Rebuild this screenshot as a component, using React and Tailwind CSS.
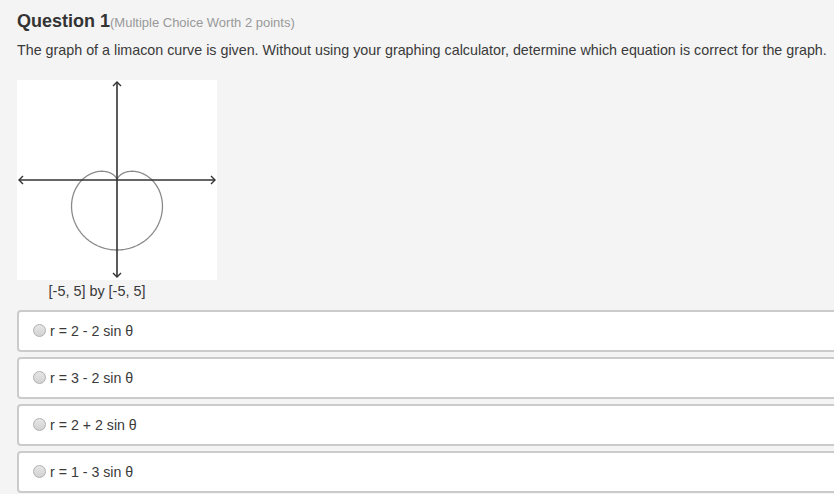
import React from "react";

function curvePath() {
  const cx = 117, cy = 180, s = 17.5;
  const pts = [];
  for (let i = 0; i <= 360; i++) {
    const t = (i / 360) * Math.PI * 2;
    const r = 2 - 2 * Math.sin(t);
    const x = cx + r * Math.cos(t) * s;
    const y = cy - r * Math.sin(t) * s;
    pts.push(`${i === 0 ? "M" : "L"}${x.toFixed(2)},${y.toFixed(2)}`);
  }
  return pts.join(" ");
}

function Graph() {
  const d = curvePath();
  return (
    <svg width="200" height="200" viewBox="17 80 200 200" className="block bg-white">
      <path d={d} fill="none" stroke="#8a8a8a" strokeWidth="1.3" />
      <line x1="19" y1="180" x2="215" y2="180" stroke="#333" strokeWidth="1.6" />
      <line x1="117" y1="82" x2="117" y2="277" stroke="#333" strokeWidth="1.6" />
      <path d="M23,176 L19,180 L23,184" fill="none" stroke="#333" strokeWidth="1.4" />
      <path d="M211,176 L215,180 L211,184" fill="none" stroke="#333" strokeWidth="1.4" />
      <path d="M113,86 L117,82 L121,86" fill="none" stroke="#333" strokeWidth="1.4" />
      <path d="M113,273 L117,277 L121,273" fill="none" stroke="#333" strokeWidth="1.4" />
    </svg>
  );
}

const options = ["r = 2 - 2 sin θ", "r = 3 - 2 sin θ", "r = 2 + 2 sin θ", "r = 1 - 3 sin θ"];

export default function App() {
  return (
    <div
      className="w-[834px] h-[494px] overflow-hidden bg-[#f4f4f4] text-[#333]"
      style={{ fontFamily: '"Liberation Sans", Arial, sans-serif' }}
    >
      <div className="pl-[17px] pt-[8px]">
        <div className="flex items-baseline h-[22px]">
          <span className="text-[18px] font-bold text-[#333]">Question 1</span>
          <span className="text-[13px] text-[#999]">(Multiple Choice Worth 2 points)</span>
        </div>
        <p className="mt-[11px] text-[14.3px] leading-[18px] text-[#3a3a3a] whitespace-nowrap">
          The graph of a limacon curve is given. Without using your graphing calculator, determine which equation is correct for the graph.
        </p>
        <div className="mt-[21px]">
          <Graph />
        </div>
        <div className="w-[200px] text-center text-[14.4px] leading-[18px] mt-[2px] text-[#3a3a3a]">
          <span className="inline-block -ml-[40px]">[-5, 5] by [-5, 5]</span>
        </div>
        <div className="mt-[10px] flex flex-col gap-[5px] w-[840px]">
          {options.map((o) => (
            <div
              key={o}
              className="h-[42px] bg-white border-2 border-[#cbcbcb] rounded-[4px] flex items-center pl-[14px]"
            >
              <span className="w-[13px] h-[13px] rounded-full border border-[#b0b0b0] bg-gradient-to-b from-[#e6e6e6] to-[#d2d2d2] mr-[4px] mt-[-1px]" />
              <span className="text-[14.2px] text-[#3a3a3a] mt-[1px]">{o}</span>
            </div>
          ))}
        </div>
      </div>
    </div>
  );
}
